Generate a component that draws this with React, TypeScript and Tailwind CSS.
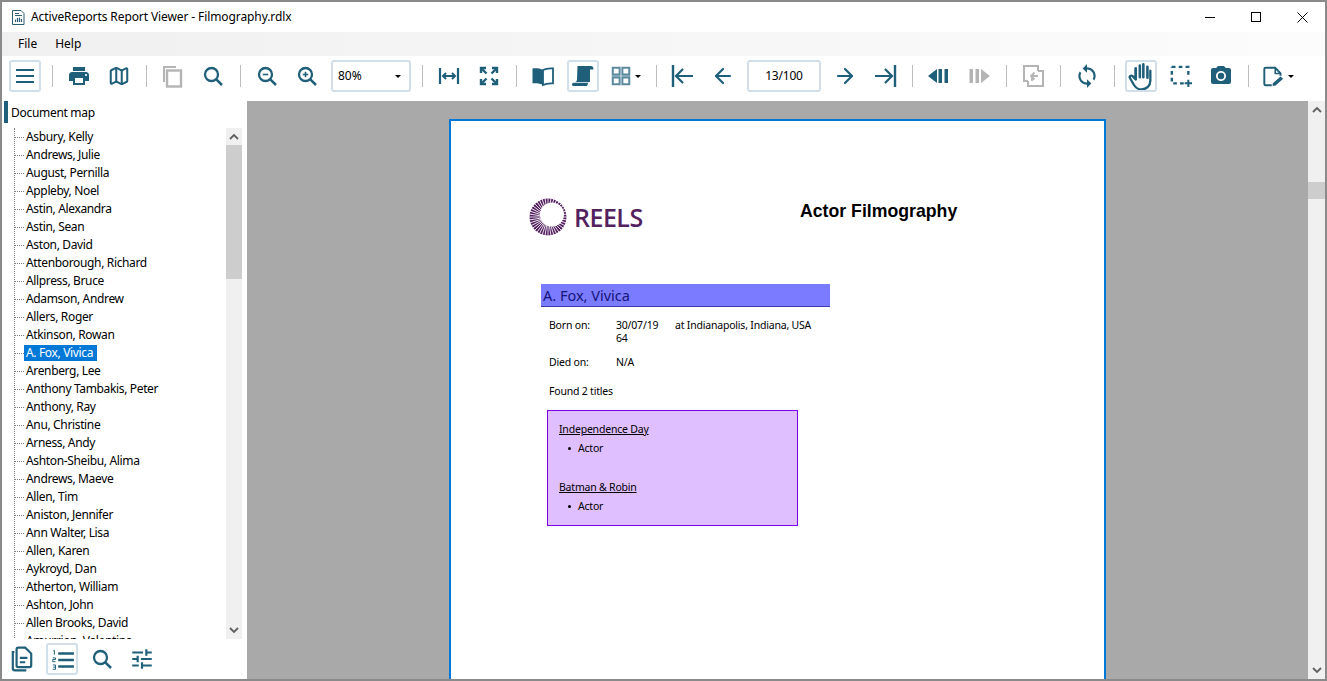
import { ReactNode } from "react";
import { ArrowLeft, ArrowRight, Map as MapIcon } from "lucide-react";
import { MdPhotoCamera, MdPrint, MdSync, MdTune } from "react-icons/md";

const uiFont = "font-['Noto_Sans',sans-serif]";
const teal = "#1f5f7a";
const off = "#b4b4b4";

const names = [
  "Asbury, Kelly", "Andrews, Julie", "August, Pernilla", "Appleby, Noel", "Astin, Alexandra", "Astin, Sean",
  "Aston, David", "Attenborough, Richard", "Allpress, Bruce", "Adamson, Andrew", "Allers, Roger", "Atkinson, Rowan",
  "A. Fox, Vivica", "Arenberg, Lee", "Anthony Tambakis, Peter", "Anthony, Ray", "Anu, Christine", "Arness, Andy",
  "Ashton-Sheibu, Alima", "Andrews, Maeve", "Allen, Tim", "Aniston, Jennifer", "Ann Walter, Lisa", "Allen, Karen",
  "Aykroyd, Dan", "Atherton, William", "Ashton, John", "Allen Brooks, David", "Amurrion, Valentina",
];

function Btn({ children, active }: { children: ReactNode; active?: boolean }) {
  return (
    <div className="mx-1 h-8 w-8 shrink-0">
      <div className={`flex h-8 w-8 items-center justify-center rounded-[3px] border-2 ${active ? "border-[#d0dfe9]" : "border-transparent"}`}>
        {children}
      </div>
    </div>
  );
}

function Sep() {
  return (
    <div className="flex h-8 w-[14px] shrink-0 items-center justify-center">
      <div className="h-[22px] w-px bg-[#bdbdbd]" />
    </div>
  );
}

function Caret() {
  return <div className="h-0 w-0 border-x-[3px] border-t-[3px] border-x-transparent border-t-black" />;
}

function Svg({ children, size = 24 }: { children: ReactNode; size?: number }) {
  return (
    <svg width={size} height={size} viewBox="0 0 24 24" fill="none" className="shrink-0">
      {children}
    </svg>
  );
}

function Lens({ sign }: { sign?: "plus" | "minus" }) {
  return (
    <Svg>
      <circle cx="10.500" cy="10.500" r="6.500" stroke={teal} strokeWidth="2.300" />
      <path d="M15.300 15.300 21 21" stroke={teal} strokeWidth="2.500" />
      {sign && <path d="M7.800 10.500h5.400" stroke={teal} strokeWidth="1.600" />}
      {sign === "plus" && <path d="M10.500 7.800v5.400" stroke={teal} strokeWidth="1.600" />}
    </Svg>
  );
}

function ToolBar() {
  return (
    <div className="flex h-[45px] shrink-0 items-start bg-white pl-[3px] pt-[4px]">
      <Btn active>
        <Svg>
          <path d="M3 6h18M3 12h18M3 18h18" stroke={teal} strokeWidth="2.200" />
        </Svg>
      </Btn>
      <Sep />
      <Btn><MdPrint size={24} color={teal} /></Btn>
      <Btn><MapIcon size={22} color={teal} strokeWidth={2.2} /></Btn>
      <Sep />
      <Btn>
        <Svg>
          <path d="M15 3H3v15" stroke={off} strokeWidth="2" />
          <rect x="6" y="6.500" width="14" height="16" stroke={off} strokeWidth="2.400" />
        </Svg>
      </Btn>
      <Btn><Lens /></Btn>
      <Sep />
      <Btn><Lens sign="minus" /></Btn>
      <Btn><Lens sign="plus" /></Btn>
      <div className="mx-1 flex h-8 w-[80px] shrink-0 items-center justify-between rounded-[3px] border-2 border-[#d0dfe9] pl-[5px] pr-[8px] text-[12px] text-black">
        <span>80%</span>
        <Caret />
      </div>
      <Sep />
      <Btn>
        <Svg>
          <path d="M3 4v16M21 4v16" stroke={teal} strokeWidth="2.200" />
          <path d="M6 12h12" stroke={teal} strokeWidth="2" />
          <path d="M9 9l-3 3 3 3M15 9l3 3-3 3" stroke={teal} strokeWidth="2" />
        </Svg>
      </Btn>
      <Btn>
        <Svg>
          <path d="M4 9V4h5M20 9V4h-5M4 15v5h5M20 15v5h-5" stroke={teal} strokeWidth="2.400" />
          <path d="M4.500 4.500l5 5M19.500 4.500l-5 5M4.500 19.500l5-5M19.500 19.500l-5-5" stroke={teal} strokeWidth="2.400" />
        </Svg>
      </Btn>
      <Sep />
      <Btn>
        <Svg>
          <path d="M12 6C9.500 4.500 6 4.200 1.500 4.400v15c4.500-.2 8 .2 10.500 1.600z" fill={teal} />
          <path d="M12 6c2.500-1.500 6-1.800 10-1.600v15c-4-.2-7.500.2-10 1.600z" stroke={teal} strokeWidth="1.800" />
        </Svg>
      </Btn>
      <Btn active>
        <Svg>
          <path d="M6.500 2H20c1.500 0 2.500 1 2.500 3.500H19V18H4.500c1-.5 1.500-1.500 1.500-3z" fill={teal} />
          <path d="M1 20.500c0-1 .8-1.700 1.700-1.700h14.800c-.6.700-1 1.500-1 2.200 0 .5-.5 1-1 1H2.500c-1 0-1.500-.6-1.500-1.500z" fill={teal} />
        </Svg>
      </Btn>
      <div className="flex h-8 w-[46px] shrink-0 items-center pl-[7px]">
        <Svg size={22}>
          <path d="M3 3h7.500v7.500H3zM13.500 3H21v7.500h-7.500zM3 13.500h7.500V21H3zM13.500 13.500H21V21h-7.500z" stroke="#5b8a9f" strokeWidth="2.200" />
        </Svg>
        <div className="ml-[3px]"><Caret /></div>
      </div>
      <Sep />
      <Btn>
        <Svg>
          <path d="M2 1v22" stroke={teal} strokeWidth="2.400" />
          <path d="M22 12H5M12 5l-7 7 7 7" stroke={teal} strokeWidth="2.200" />
        </Svg>
      </Btn>
      <Btn><ArrowLeft size={24} color={teal} strokeWidth={2.2} /></Btn>
      <div className="mx-1 flex h-8 w-[74px] shrink-0 items-center justify-center rounded-[3px] border-2 border-[#d0dfe9] text-[12px] tracking-[-0.2px] text-black">
        13/100
      </div>
      <Btn><ArrowRight size={24} color={teal} strokeWidth={2.2} /></Btn>
      <Btn>
        <Svg>
          <path d="M22 1v22" stroke={teal} strokeWidth="2.400" />
          <path d="M2 12h17M12 5l7 7-7 7" stroke={teal} strokeWidth="2.200" />
        </Svg>
      </Btn>
      <Sep />
      <Btn>
        <Svg>
          <path d="M1 12 10 5v14z" fill={teal} />
          <path d="M11.500 5h3.500v14h-3.500zM17.500 5H21v14h-3.500z" fill={teal} />
        </Svg>
      </Btn>
      <Btn>
        <Svg>
          <path d="M23 12 14 5v14z" fill={off} />
          <path d="M2.500 5H6v14H2.500zM8.500 5H12v14H8.500z" fill={off} />
        </Svg>
      </Btn>
      <Sep />
      <Btn>
        <Svg>
          <path d="M17 7V2H3v15h4" stroke={off} strokeWidth="2" />
          <path d="M7 17v5h15V7h-5" stroke={off} strokeWidth="2" />
          <path d="M17 12h-6v5M13.500 8.500 10 12l3.500 3.500" stroke={off} strokeWidth="1.800" />
        </Svg>
      </Btn>
      <Sep />
      <Btn><MdSync size={26} color={teal} /></Btn>
      <Sep />
      <Btn active>
        <Svg size={28}>
          <path d="M20 7.500V16c0 4.300-3.200 7.500-7.500 7.500-3 0-5-1.300-6.500-3.800l-3.500-6c-.8-1.300 1-2.700 2.300-1.600L7.500 15V5.500" stroke={teal} strokeWidth="2" strokeLinecap="round" strokeLinejoin="round" />
          <path d="M7.500 5.500v9M11 3v10M14 2v11M17.500 4v9.500" stroke={teal} strokeWidth="2.200" strokeLinecap="round" />
        </Svg>
      </Btn>
      <Btn>
        <Svg size={22}>
          <path d="M2 2h18v12M15 20H2V2" stroke={teal} strokeWidth="2.600" strokeDasharray="4 3.500" />
          <path d="M20 16v8M16 20h8" stroke={teal} strokeWidth="2.200" />
        </Svg>
      </Btn>
      <Btn><MdPhotoCamera size={24} color={teal} /></Btn>
      <Sep />
      <div className="flex h-8 items-center pl-[8px]">
        <Svg size={21}>
          <path d="M10 22H3a1.500 1.500 0 0 1-1.500-1.500v-17A1.500 1.500 0 0 1 3 2h11l6 6.500v2.500" stroke={teal} strokeWidth="2.200" />
          <path d="M14 2.500v6h6" stroke={teal} strokeWidth="1.800" />
          <path d="M11 20l9-8 3 2.500-9 8h-3z" fill={teal} />
        </Svg>
        <div className="ml-[4px]"><Caret /></div>
      </div>
    </div>
  );
}

function ScrollBar({ thumbTop, thumbHeight, wide }: { thumbTop: number; thumbHeight: number; wide?: boolean }) {
  return (
    <div className={`flex shrink-0 flex-col bg-[#f0f0f0] ${wide ? "w-[17px]" : "w-[16px]"}`}>
      <div className="flex h-[17px] shrink-0 items-center justify-center">
        <svg width="10" height="7" viewBox="0 0 10 7" fill="none"><path d="M1 6l4-4 4 4" stroke="#606060" strokeWidth="1.800" /></svg>
      </div>
      <div className="flex-1">
        <div className="w-full bg-[#cdcdcd]" style={{ marginTop: thumbTop, height: thumbHeight }} />
      </div>
      <div className="flex h-[17px] shrink-0 items-center justify-center">
        <svg width="10" height="7" viewBox="0 0 10 7" fill="none"><path d="M1 1l4 4 4-4" stroke="#606060" strokeWidth="1.800" /></svg>
      </div>
    </div>
  );
}

function DocTree() {
  return (
    <div className="flex h-[511px] shrink-0 pr-[5px]">
      <div className="min-w-0 flex-1 overflow-hidden pl-[12px]">
        <div className="mt-[9px] border-l border-dotted border-[#808080]">
          <div className="-mt-[9px]">
            {names.map((name) => {
              const selected = name === "A. Fox, Vivica";
              return (
                <div key={name} className="flex h-[18px] items-center">
                  <div className="h-0 w-[9px] shrink-0 border-t border-dotted border-[#808080]" />
                  <span className={`pl-[2px] text-[12px] leading-[16px] tracking-[-0.35px] ${selected ? "bg-[#0078d7] pr-[4px] text-white" : "pr-[2px] text-black"}`}>
                    {name}
                  </span>
                </div>
              );
            })}
          </div>
        </div>
      </div>
      <ScrollBar thumbTop={0} thumbHeight={134} />
    </div>
  );
}

function SideTabs() {
  return (
    <div className="flex flex-1 items-center">
      <Btn>
        <Svg size={26}>
          <path d="M5 5.500H3.500v15A2 2 0 0 0 5.500 22.500H16" stroke={teal} strokeWidth="2" />
          <path d="M7 3a1.500 1.500 0 0 1 1.500-1.500H15L20.500 7v11a1.500 1.500 0 0 1-1.500 1.500H8.500A1.500 1.500 0 0 1 7 18z" stroke={teal} strokeWidth="2" />
          <path d="M10 11h7M10 15h5" stroke={teal} strokeWidth="2" />
        </Svg>
      </Btn>
      <Btn active>
        <Svg size={26}>
          <path d="M8.500 7H23M8.500 13H23M8.500 19H23" stroke={teal} strokeWidth="2.300" />
          <path d="M4 4.500 5 4v4M3.500 11h2.500v1.500H3.500V14.500H6M3.500 17.500H6v4H3.500M4 19.500h2" stroke={teal} strokeWidth="0.900" />
        </Svg>
      </Btn>
      <Btn><Lens /></Btn>
      <Btn><MdTune size={26} color={teal} /></Btn>
    </div>
  );
}

function ReelsLogo() {
  const spokes = Array.from({ length: 40 }, (_, i) => (i * 360) / 40);
  return (
    <svg width="40" height="40" viewBox="0 0 40 40" className="shrink-0">
      <circle cx="20" cy="20" r="18.500" fill="#54215f" />
      {spokes.map((a) => (
        <line key={a} x1="20" y1="0" x2="20" y2="20" stroke="white" strokeWidth="0.800" transform={`rotate(${a} 20 20)`} />
      ))}
      <circle cx="24" cy="17.500" r="12" fill="white" />
    </svg>
  );
}

function ReportPage() {
  return (
    <div className="ml-[202px] h-[640px] w-[657px] shrink-0 border-2 border-[#0078d7] bg-white font-['Noto_Sans',sans-serif] text-black">
      <div className="flex pl-[77px] pt-[76px]">
        <div className="flex w-[272px] items-center">
          <ReelsLogo />
          <span className="ml-[6px] font-['Open_Sans',sans-serif] text-[25px] font-semibold leading-[40px] tracking-[-0.5px] text-[#54215f]">REELS</span>
        </div>
        <div className="mt-[2px] font-['Liberation_Sans',sans-serif] text-[17.700px] font-bold leading-[24px]">Actor Filmography</div>
      </div>
      <div className="ml-[90px] mt-[47px] h-[23px] w-[289px] border-b border-[#3c3cb4] bg-[#7b7bff] pl-[2px] text-[14.500px] leading-[22px] text-[#14147a]">
        A. Fox, Vivica
      </div>
      <div className="ml-[98px] mt-[12px] flex text-[10.500px] leading-[13px] tracking-[-0.2px]">
        <div className="w-[67px]">Born on:</div>
        <div>
          <div className="flex">
            <span className="w-[59px]">30/07/19</span>
            <span>at Indianapolis, Indiana, USA</span>
          </div>
          <div>64</div>
        </div>
      </div>
      <div className="ml-[98px] mt-[11px] flex text-[10.500px] leading-[13px] tracking-[-0.2px]">
        <div className="w-[67px]">Died on:</div>
        <div>N/A</div>
      </div>
      <div className="ml-[98px] mt-[16px] text-[10.500px] leading-[13px] tracking-[-0.2px]">Found 2 titles</div>
      <div className="ml-[96px] mt-[12px] h-[116px] w-[251px] border border-[#7a00e0] bg-[#dfbfff] pl-[11px] pt-[12px] text-[10.500px] leading-[13px] tracking-[-0.2px]">
        <div className="underline">Independence Day</div>
        <div className="mt-[6px] flex items-center pl-[9px]">
          <div className="mr-[7px] h-[3px] w-[3px] rounded-full bg-black" />
          Actor
        </div>
        <div className="mt-[26px] underline">Batman &amp; Robin</div>
        <div className="mt-[6px] flex items-center pl-[9px]">
          <div className="mr-[7px] h-[3px] w-[3px] rounded-full bg-black" />
          Actor
        </div>
      </div>
    </div>
  );
}

export default function App() {
  return (
    <div className={`flex h-[681px] w-[1327px] flex-col overflow-hidden border-2 border-[#8a8a8a] bg-white ${uiFont}`}>
      {/* Title bar */}
      <div className="flex h-[30px] shrink-0 items-center pl-[8px]">
        <svg width="16" height="17" viewBox="0 0 16 17" fill="none">
          <path d="M2.500 1.500h8.500l3 3v11h-11.500z" stroke="#2d5d75" strokeWidth="1" />
          <path d="M5 4.500h4M5 6.500h7" stroke="#2d5d75" strokeWidth="1" />
          <path d="M5.500 13v-2.500M7.500 13V9M9.500 13v-4.500M11.500 13v-3" stroke="#2d5d75" strokeWidth="1.200" />
        </svg>
        <span className="ml-[5px] text-[12px] tracking-[-0.1px] text-black">ActiveReports Report Viewer - Filmography.rdlx</span>
        <div className="ml-auto flex h-full items-center">
          <div className="flex w-[46px] justify-center"><div className="h-px w-[10px] bg-black" /></div>
          <div className="flex w-[46px] justify-center"><div className="h-[10px] w-[10px] border border-black" /></div>
          <div className="flex w-[46px] justify-center">
            <svg width="11" height="11" viewBox="0 0 11 11" fill="none"><path d="M.5.500l10 10M10.500.500l-10 10" stroke="black" strokeWidth="1" /></svg>
          </div>
        </div>
      </div>
      {/* Menu */}
      <div className="flex h-[24px] shrink-0 items-center gap-[18px] bg-gradient-to-r from-[#f0f0f0] to-[#fcfcfc] pl-[16px] text-[12px] text-black">
        <span>File</span>
        <span>Help</span>
      </div>
      <ToolBar />
      {/* Body */}
      <div className="flex min-h-0 flex-1">
        <div className="flex w-[245px] shrink-0 flex-col">
          <div className="flex h-[27px] shrink-0 pl-[2px]">
            <div className="h-[22px] w-[4px] bg-[#1f5f7a]" />
            <span className="ml-[3px] text-[12px] leading-[24px] tracking-[-0.3px] text-black">Document map</span>
          </div>
          <DocTree />
          <SideTabs />
        </div>
        <div className="flex min-w-0 flex-1 overflow-hidden bg-[#a9a9a9] pt-[18px]">
          <ReportPage />
          <div className="flex-1" />
        </div>
        <ScrollBar thumbTop={64} thumbHeight={17} wide />
      </div>
    </div>
  );
}
